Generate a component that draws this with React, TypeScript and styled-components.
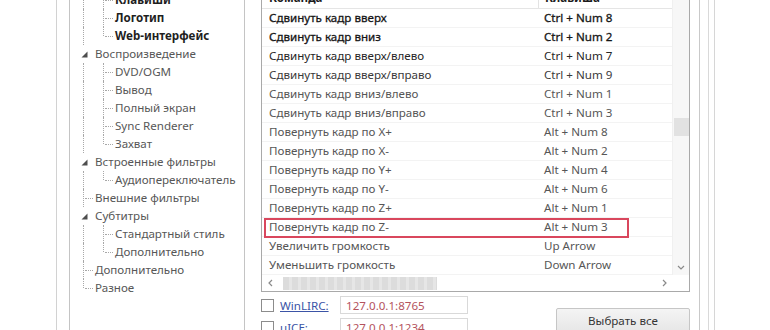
import React from "react";
import styled, { createGlobalStyle, css } from "styled-components";

const GlobalStyle = createGlobalStyle`
  html, body { margin: 0; padding: 0; background: #ffffff; }
  body {
    font-family: "Noto Sans", "Open Sans", sans-serif;
    font-size: 11.6px;
    color: #4a4a4a;
  }
`;

const Screen = styled.div`
  width: 770px;
  height: 330px;
  overflow: hidden;
  display: flex;
  align-items: flex-start;
  background: #ffffff;
`;

const Dialog = styled.div`
  margin-left: 56px;
  height: 330px;
  display: flex;
  align-items: flex-start;
  border-left: 1px solid #d2d2d2;
  padding: 0 9px 0 12px;
  background: #ffffff;
  flex: none;
`;

const FrameEdge = styled.div`
  width: 14px;
  height: 330px;
  flex: none;
  border-left: 1px solid #c9c9c9;
  border-right: 1px solid #d6d6d6;
  background: linear-gradient(
    to right,
    transparent 8px,
    #d9d9d9 8px,
    #d9d9d9 9px,
    transparent 9px
  );
`;

/* ---------- Tree ---------- */

const TreeBox = styled.div`
  width: 174px;
  height: 360px;
  margin-top: -11px;
  padding-top: 1px;
  border: 1px solid #c4c4c4;
  background: #ffffff;
  flex: none;
`;

const TreeRow = styled.div`
  display: flex;
  align-items: center;
  height: 18px;
  padding-left: 4px;
`;

type LineKind = "full" | "top" | "none";

const Guide = styled.span<{ $line: LineKind; $tick?: boolean }>`
  position: relative;
  width: 20px;
  height: 18px;
  flex: none;
  &::before {
    content: "";
    position: absolute;
    left: 9px;
    top: 0;
    height: ${(p) => (p.$line === "full" ? "18px" : p.$line === "top" ? "9px" : "0")};
    border-left: 1px dotted #a8a8a8;
  }
  ${(p) =>
    p.$tick &&
    css`
      &::after {
        content: "";
        position: absolute;
        left: 11px;
        top: 9px;
        width: 8px;
        border-top: 1px dotted #a8a8a8;
      }
    `}
`;

const ExpanderCell = styled.span`
  width: 20px;
  height: 18px;
  flex: none;
  display: block;
`;

const TreeLabel = styled.span<{ $bold?: boolean }>`
  margin-left: 1px;
  white-space: nowrap;
  line-height: 18px;
  color: ${(p) => (p.$bold ? "#1e1e1e" : "#575757")};
  font-weight: ${(p) => (p.$bold ? 700 : 400)};
`;

type TreeItem = {
  label: string;
  level: 0 | 1;
  bold?: boolean;
  expander?: boolean;
  root: LineKind;
  child?: LineKind;
};

const treeItems: TreeItem[] = [
  { label: "Клавиши", level: 1, bold: true, root: "full", child: "full" },
  { label: "Логотип", level: 1, bold: true, root: "full", child: "full" },
  { label: "Web-интерфейс", level: 1, bold: true, root: "full", child: "top" },
  { label: "Воспроизведение", level: 0, expander: true, root: "none" },
  { label: "DVD/OGM", level: 1, root: "full", child: "full" },
  { label: "Вывод", level: 1, root: "full", child: "full" },
  { label: "Полный экран", level: 1, root: "full", child: "full" },
  { label: "Sync Renderer", level: 1, root: "full", child: "full" },
  { label: "Захват", level: 1, root: "full", child: "top" },
  { label: "Встроенные фильтры", level: 0, expander: true, root: "none" },
  { label: "Аудиопереключатель", level: 1, root: "full", child: "top" },
  { label: "Внешние фильтры", level: 0, root: "full" },
  { label: "Субтитры", level: 0, expander: true, root: "none" },
  { label: "Стандартный стиль", level: 1, root: "full", child: "full" },
  { label: "Дополнительно", level: 1, root: "full", child: "top" },
  { label: "Дополнительно", level: 0, root: "full" },
  { label: "Разное", level: 0, root: "top" },
];

const Expander = () => (
  <ExpanderCell>
    <svg width="20" height="18" viewBox="0 0 20 18">
      <path d="M13.5 6.5 L13.5 12.5 L7.5 12.5 Z" fill="#4e4e4e" />
    </svg>
  </ExpanderCell>
);

const Tree = () => (
  <TreeBox>
    {treeItems.map((it, i) => (
      <TreeRow key={i}>
        {it.level === 0 ? (
          it.expander ? (
            <Expander />
          ) : (
            <Guide $line={it.root} $tick />
          )
        ) : (
          <>
            <Guide $line={it.root} />
            <Guide $line={it.child || "full"} $tick />
          </>
        )}
        <TreeLabel $bold={it.bold}>{it.label}</TreeLabel>
      </TreeRow>
    ))}
  </TreeBox>
);

/* ---------- List view ---------- */

const RightPane = styled.div`
  margin-left: 16px;
  margin-top: -16px;
  width: 429px;
  display: flex;
  flex-direction: column;
  flex: none;
`;

const ListBox = styled.div`
  height: 306px;
  border: 1px solid #a9a9a9;
  display: grid;
  grid-template-columns: 410px 17px;
  grid-template-rows: 290px 16px;
  background: #ffffff;
`;

const ListContent = styled.div`
  display: flex;
  flex-direction: column;
  overflow: hidden;
`;

const Columns = styled.div`
  display: grid;
  grid-template-columns: 276px 134px;
  align-items: center;
`;

const HeaderRow = styled(Columns)`
  height: 23px;
  border-bottom: 1px solid #e5e5e5;
  font-weight: 700;
  color: #1c1c1c;
`;

const HeaderCell = styled.div<{ $sep?: boolean }>`
  height: 23px;
  line-height: 25px;
  padding-left: ${(p) => (p.$sep ? "6px" : "7px")};
  border-left: ${(p) => (p.$sep ? "1px solid #e3e3e3" : "none")};
  white-space: nowrap;
`;

const tones = ["#151515", "#262626", "#3a3a3a", "#565656"];

const Row = styled(Columns)<{ $tone: number; $marked?: boolean }>`
  position: relative;
  height: 18px;
  border-bottom: 1px solid #f3f3f3;
  color: ${(p) => tones[p.$tone]};
  ${(p) =>
    p.$tone === 0 &&
    css`
      -webkit-text-stroke: 0.3px #151515;
    `}
  ${(p) =>
    p.$marked &&
    css`
      &::after {
        content: "";
        position: absolute;
        left: 2px;
        top: 0;
        width: 361px;
        height: 16px;
        border: 2px solid #d9475d;
      }
    `}
`;

const Cell = styled.div<{ $second?: boolean }>`
  padding-left: ${(p) => (p.$second ? "6px" : "7px")};
  line-height: 18px;
  white-space: nowrap;
`;

const VScroll = styled.div`
  background: #f7f7f7;
  border-left: 1px solid #f0f0f0;
  display: flex;
  flex-direction: column;
  align-items: center;
`;

const VThumb = styled.div`
  margin-top: 133px;
  width: 15px;
  height: 18px;
  background: #e2e2e2;
`;

const ArrowSlot = styled.div<{ $push?: boolean }>`
  margin-top: ${(p) => (p.$push ? "auto" : "0")};
  width: 17px;
  height: 17px;
  display: flex;
  align-items: center;
  justify-content: center;
`;

const EndSlot = styled(ArrowSlot)`
  margin-left: auto;
`;

const HScroll = styled.div`
  display: flex;
  align-items: center;
  background: #ffffff;
`;

const HThumb = styled.div`
  margin-left: 4px;
  width: 154px;
  height: 13px;
  background: repeating-linear-gradient(
    to right,
    #dcdcdc 0px,
    #dcdcdc 6px,
    #e6e6e6 6px,
    #e6e6e6 9px
  );
`;

const Corner = styled.div`
  background: #ffffff;
`;

const Chevron = ({ dir }: { dir: "left" | "right" | "down" }) => {
  const d =
    dir === "left"
      ? "M5 1 L2 4 L5 7"
      : dir === "right"
      ? "M3 1 L6 4 L3 7"
      : "M1 3 L4 6 L7 3";
  return (
    <svg width="8" height="8" viewBox="0 0 8 8">
      <path d={d} fill="none" stroke="#8a8a8a" strokeWidth="1.2" />
    </svg>
  );
};

const listRows: [string, string, number, boolean?][] = [
  ["Сдвинуть кадр вверх", "Ctrl + Num 8", 0],
  ["Сдвинуть кадр вниз", "Ctrl + Num 2", 0],
  ["Сдвинуть кадр вверх/влево", "Ctrl + Num 7", 1],
  ["Сдвинуть кадр вверх/вправо", "Ctrl + Num 9", 2],
  ["Сдвинуть кадр вниз/влево", "Ctrl + Num 1", 3],
  ["Сдвинуть кадр вниз/вправо", "Ctrl + Num 3", 3],
  ["Повернуть кадр по X+", "Alt + Num 8", 3],
  ["Повернуть кадр по X-", "Alt + Num 2", 3],
  ["Повернуть кадр по Y+", "Alt + Num 4", 3],
  ["Повернуть кадр по Y-", "Alt + Num 6", 3],
  ["Повернуть кадр по Z+", "Alt + Num 1", 3],
  ["Повернуть кадр по Z-", "Alt + Num 3", 3, true],
  ["Увеличить громкость", "Up Arrow", 3],
  ["Уменьшить громкость", "Down Arrow", 3],
];

/* ---------- Bottom controls ---------- */

const Bottom = styled.div`
  display: flex;
  align-items: flex-start;
  margin-top: 4px;
`;

const ChecksColumn = styled.div`
  display: flex;
  flex-direction: column;
  gap: 4px;
`;

const CheckRow = styled.div`
  display: flex;
  align-items: center;
  height: 18px;
`;

const CheckBox = styled.span`
  width: 11px;
  height: 11px;
  border: 1px solid #8c8c8c;
  background: #ffffff;
  flex: none;
`;

const LinkLabel = styled.a`
  margin-left: 6px;
  width: 60px;
  color: #3b54a6;
  text-decoration: underline;
  white-space: nowrap;
  cursor: pointer;
`;

const AddrField = styled.div`
  width: 121px;
  height: 16px;
  border: 1px solid #d9d9d9;
  padding-left: 5px;
  line-height: 17px;
  color: #b4535d;
  background: #ffffff;
`;

const SelectAll = styled.button`
  margin-left: auto;
  margin-top: 12px;
  width: 134px;
  height: 24px;
  border: 1px solid #c6c6c6;
  border-radius: 2px;
  background: linear-gradient(#f4f4f4, #e7e7e7);
  font-family: inherit;
  font-size: 11.6px;
  color: #353535;
  padding: 0;
`;

export default function App() {
  return (
    <>
      <GlobalStyle />
      <Screen>
        <Dialog>
          <Tree />
          <RightPane>
            <ListBox>
              <ListContent>
                <HeaderRow>
                  <HeaderCell>Команда</HeaderCell>
                  <HeaderCell $sep>Клавиша</HeaderCell>
                </HeaderRow>
                {listRows.map(([cmd, key, tone, marked], i) => (
                  <Row key={i} $tone={tone} $marked={marked}>
                    <Cell>{cmd}</Cell>
                    <Cell $second>{key}</Cell>
                  </Row>
                ))}
              </ListContent>
              <VScroll>
                <VThumb />
                <ArrowSlot $push>
                  <Chevron dir="down" />
                </ArrowSlot>
              </VScroll>
              <HScroll>
                <ArrowSlot>
                  <Chevron dir="left" />
                </ArrowSlot>
                <HThumb />
                <EndSlot>
                  <Chevron dir="right" />
                </EndSlot>
              </HScroll>
              <Corner />
            </ListBox>
            <Bottom>
              <ChecksColumn>
                <CheckRow>
                  <CheckBox />
                  <LinkLabel>WinLIRC:</LinkLabel>
                  <AddrField>127.0.0.1:8765</AddrField>
                </CheckRow>
                <CheckRow>
                  <CheckBox />
                  <LinkLabel>uICE:</LinkLabel>
                  <AddrField>127.0.0.1:1234</AddrField>
                </CheckRow>
              </ChecksColumn>
              <SelectAll>Выбрать все</SelectAll>
            </Bottom>
          </RightPane>
        </Dialog>
        <FrameEdge />
      </Screen>
    </>
  );
}
